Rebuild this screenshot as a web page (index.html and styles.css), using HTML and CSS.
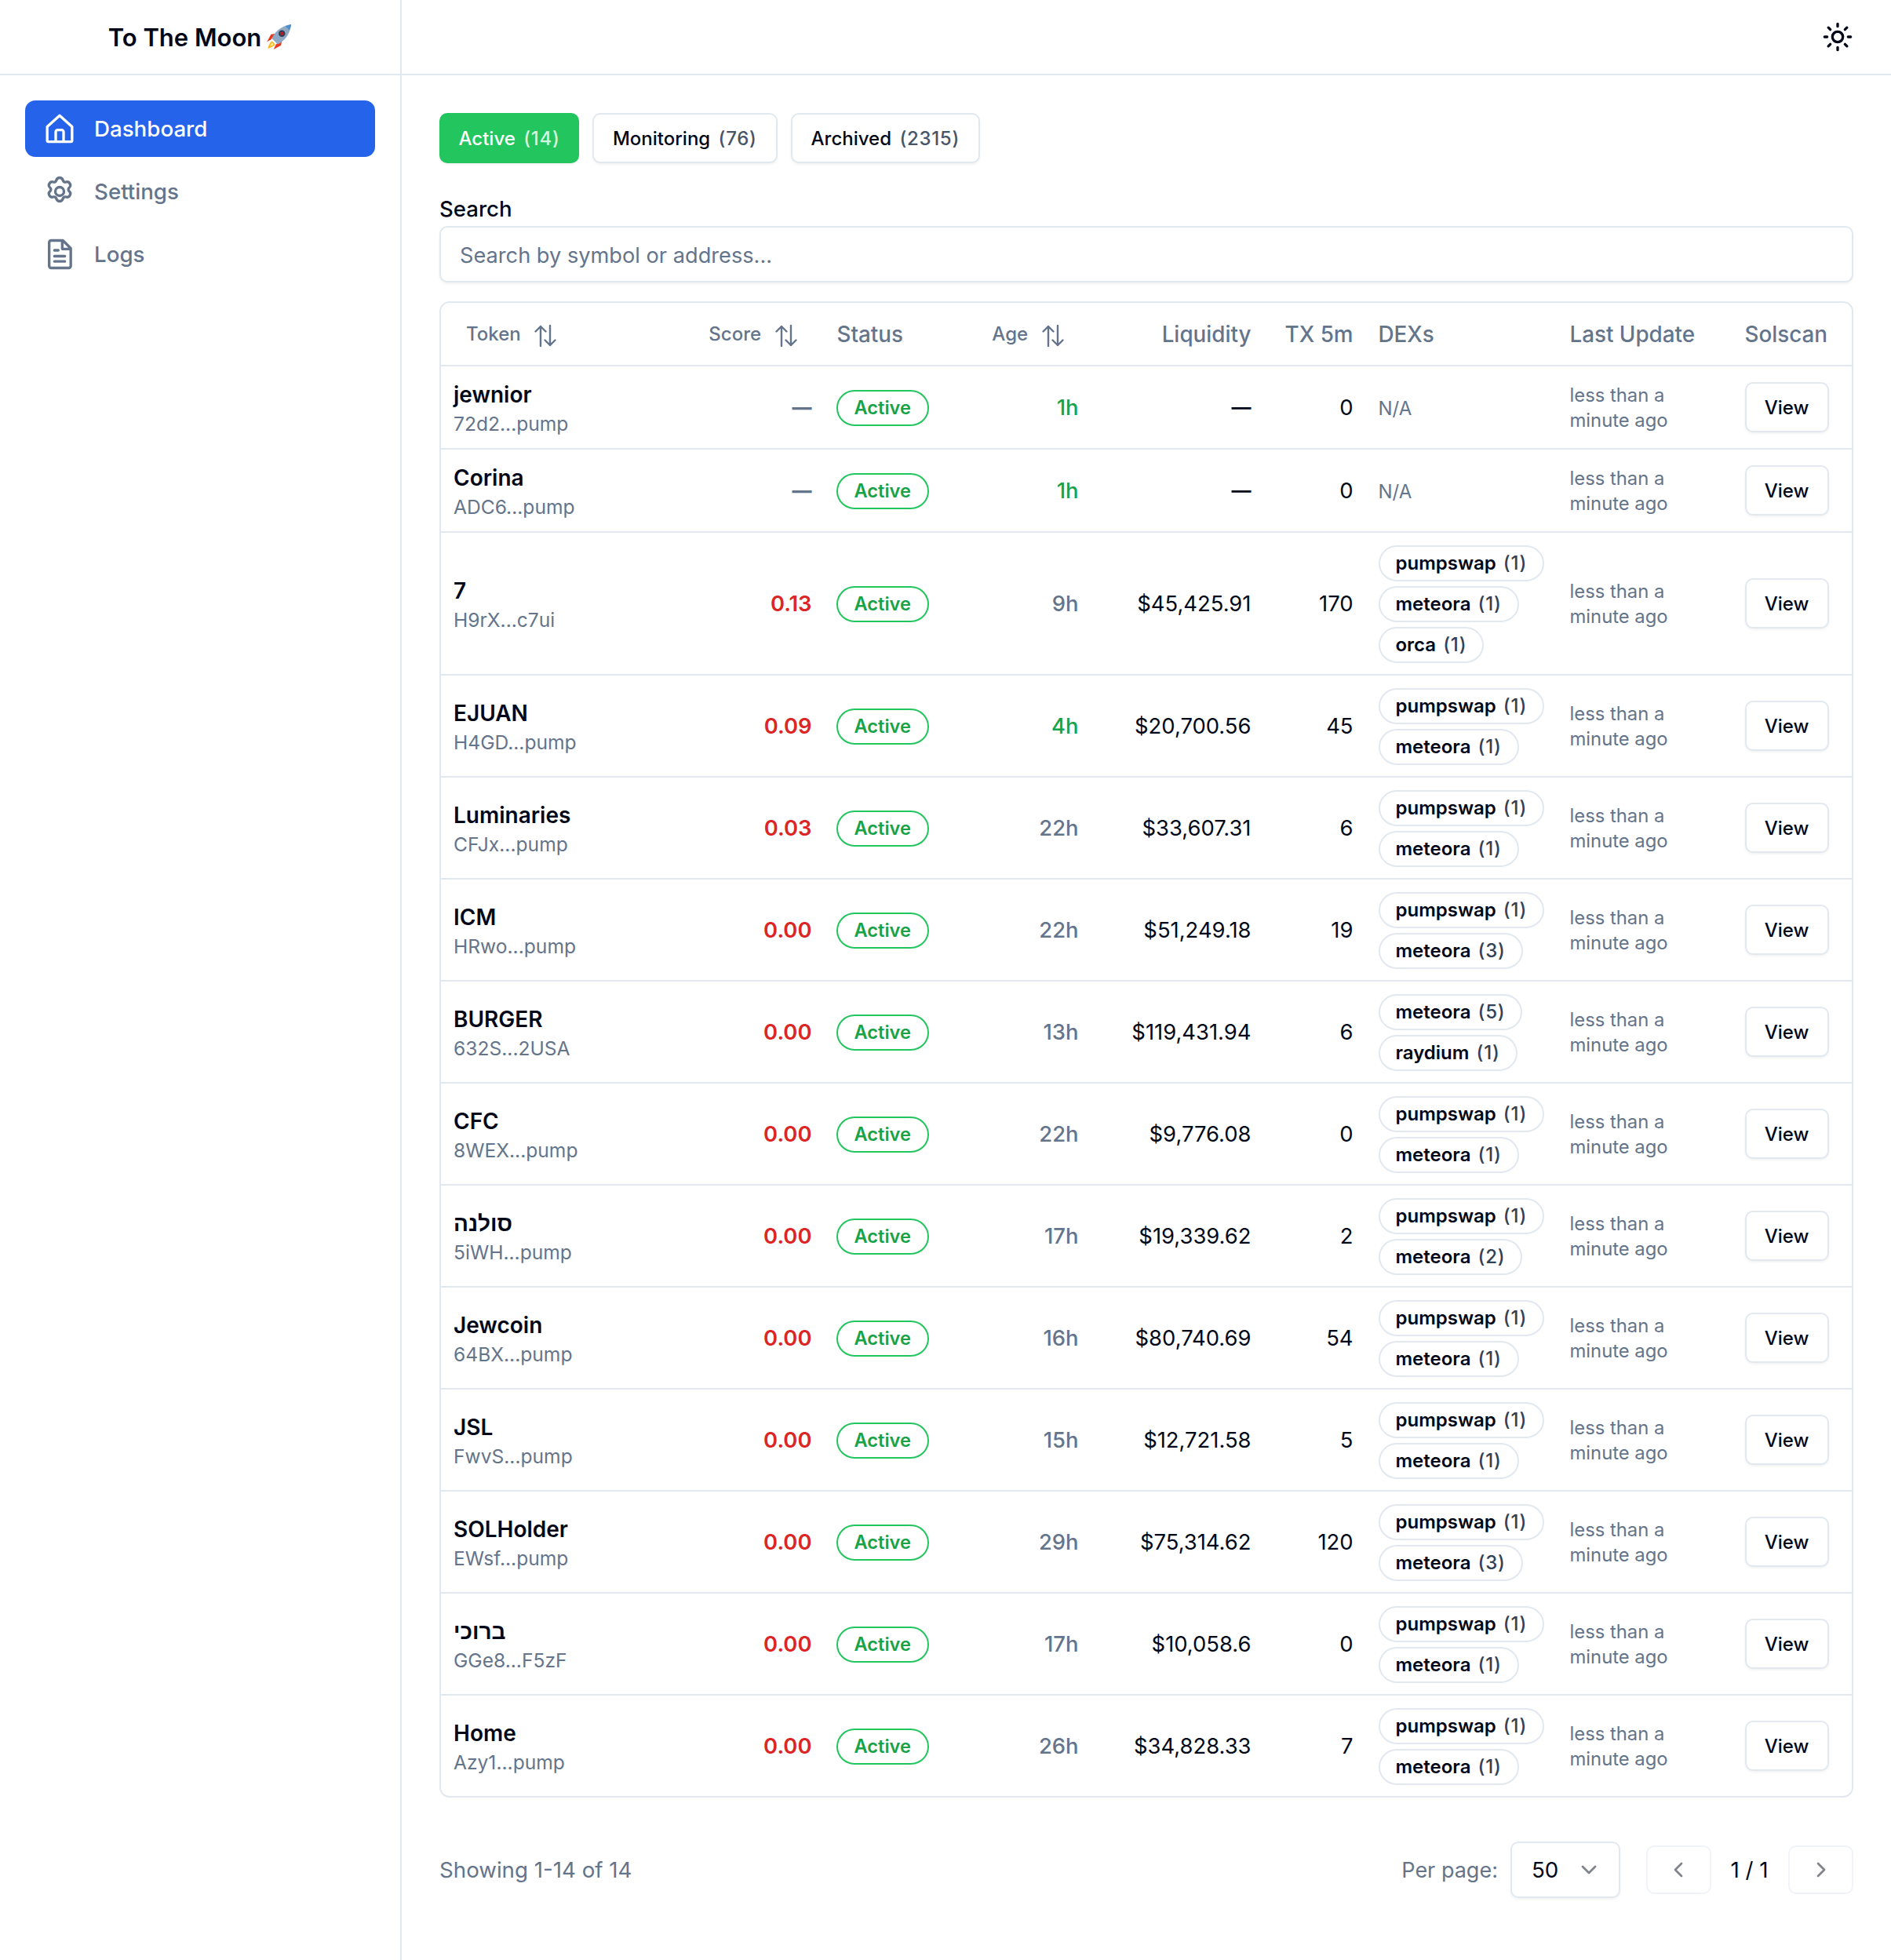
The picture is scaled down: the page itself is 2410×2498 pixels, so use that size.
FILE: index.html
```html
<!DOCTYPE html>
<html lang="en">
<head>
<meta charset="UTF-8">
<title>To The Moon</title>
<link rel="stylesheet" href="styles.css">
</head>
<body>
<svg class="defs" width="0" height="0">
  <symbol id="sort" viewBox="0 0 30 30"><path d="M9 28V3M2.500 9.500 9 3l6.500 6.500M21 2v25M14.500 20.500 21 27l6.500-6.500" fill="none" stroke="currentColor" stroke-width="2.400" stroke-linecap="round" stroke-linejoin="round"/></symbol>
</svg>
<div class="app">
  <aside class="sidebar">
    <div class="brand">To The Moon
      <svg class="rocket" viewBox="0 0 32 32">
        <path d="M7 19 2 22l5-9 6-1z" fill="#e8391f"/>
        <path d="M13 25l-3 6 9-5 1-6z" fill="#e8391f"/>
        <path d="M8 21c-3 2-4 6-5 9 3-1 7-2 9-5z" fill="#fbb91f"/>
        <path d="M8 23c-1 1-2 3-2 4 1 0 3-1 4-2z" fill="#fff0a8"/>
        <path d="M8 18C11 10 19 3 31 1c-1 12-8 20-16 24z" fill="#8fa9c4"/>
        <path d="M24 3l7-2c0 3-1 5-2 7z" fill="#4c8fd0"/>
        <circle cx="20" cy="12" r="4" fill="#2d3f55"/>
        <circle cx="20" cy="12" r="2.200" fill="#b3202a"/>
      </svg>
    </div>
    <nav class="nav">
      <a class="nav-item active">
        <svg class="nav-icon" viewBox="0 0 24 24"><path d="M2.500 10.500 12 2l9.500 8.500V21a1 1 0 0 1-1 1h-17a1 1 0 0 1-1-1zM9 22v-7.500a1.500 1.500 0 0 1 1.500-1.500h3a1.500 1.500 0 0 1 1.500 1.500V22"/></svg>
        Dashboard
      </a>
      <a class="nav-item">
        <svg class="nav-icon" viewBox="0 0 24 24"><path d="M12 1.500c1.300 0 2.200.8 2.500 2 .3 1 1.300 1.600 2.300 1.300 1.200-.3 2.400 0 3 1.200.7 1.100.4 2.300-.5 3.100-.8.800-.8 2 0 2.800.9.800 1.200 2 .5 3.100-.6 1.200-1.800 1.500-3 1.200-1-.3-2 .3-2.300 1.300-.3 1.200-1.200 2-2.500 2s-2.200-.8-2.500-2c-.3-1-1.300-1.600-2.300-1.300-1.200.3-2.400 0-3-1.200-.7-1.100-.4-2.300.5-3.100.8-.8.8-2 0-2.800-.9-.8-1.200-2-.5-3.100.6-1.200 1.800-1.500 3-1.200 1 .3 2-.3 2.300-1.300.3-1.200 1.200-2 2.500-2z"/><circle cx="12" cy="12" r="3.300"/></svg>
        Settings
      </a>
      <a class="nav-item">
        <svg class="nav-icon" viewBox="0 0 24 24"><path d="M5.500 1.500h9l6 6V21a1.500 1.500 0 0 1-1.500 1.500H5.500A1.500 1.500 0 0 1 4 21V3a1.500 1.500 0 0 1 1.500-1.500zM14 2v6h6M8 9h3M8 13.500h8M8 17.500h8"/></svg>
        Logs
      </a>
    </nav>
  </aside>
  <div class="content">
    <header class="topbar">
      <svg class="sun" viewBox="0 0 24 24"><circle cx="12" cy="12" r="4"/><path d="M12 2v2M12 20v2M4.900 4.900l1.500 1.500M17.600 17.600l1.500 1.500M2 12h2M20 12h2M4.900 19.100l1.500-1.500M17.600 6.400l1.500-1.500"/></svg>
    </header>
    <main class="main">
      <div class="tabs">
        <button class="tab tab-on">Active <span class="tab-count">(14)</span></button>
        <button class="tab">Monitoring <span class="tab-count">(76)</span></button>
        <button class="tab">Archived <span class="tab-count">(2315)</span></button>
      </div>
      <label class="search-label">Search</label>
      <input class="search" type="text" placeholder="Search by symbol or address...">
      <div class="card">
        <table class="tokens">
          <colgroup>
            <col class="c-token"><col class="c-score"><col class="c-status"><col class="c-age"><col class="c-liq"><col class="c-tx"><col class="c-dex"><col class="c-upd"><col class="c-sol">
          </colgroup>
          <thead>
            <tr>
              <th class="sortable left">Token <svg class="sort-icon"><use href="#sort"/></svg></th>
              <th class="sortable">Score <svg class="sort-icon"><use href="#sort"/></svg></th>
              <th class="left">Status</th>
              <th class="sortable">Age <svg class="sort-icon"><use href="#sort"/></svg></th>
              <th>Liquidity</th>
              <th>TX 5m</th>
              <th class="left">DEXs</th>
              <th class="left">Last Update</th>
              <th class="left">Solscan</th>
            </tr>
          </thead>
          <tbody>
            <tr>
              <td><div class="name">jewnior</div><div class="addr">72d2...pump</div></td>
              <td class="num score none">—</td>
              <td><span class="status">Active</span></td>
              <td class="num age fresh">1h</td>
              <td class="num dash">—</td>
              <td class="num">0</td>
              <td class="na">N/A</td>
              <td class="upd">less than a minute ago</td>
              <td><button class="view">View</button></td>
            </tr>
            <tr>
              <td><div class="name">Corina</div><div class="addr">ADC6...pump</div></td>
              <td class="num score none">—</td>
              <td><span class="status">Active</span></td>
              <td class="num age fresh">1h</td>
              <td class="num dash">—</td>
              <td class="num">0</td>
              <td class="na">N/A</td>
              <td class="upd">less than a minute ago</td>
              <td><button class="view">View</button></td>
            </tr>
            <tr>
              <td><div class="name">7</div><div class="addr">H9rX...c7ui</div></td>
              <td class="num score">0.13</td>
              <td><span class="status">Active</span></td>
              <td class="num age">9h</td>
              <td class="num">$45,425.91</td>
              <td class="num">170</td>
              <td><div class="dexs"><span class="dex">pumpswap <i>(1)</i></span><span class="dex">meteora <i>(1)</i></span><span class="dex">orca <i>(1)</i></span></div></td>
              <td class="upd">less than a minute ago</td>
              <td><button class="view">View</button></td>
            </tr>
            <tr>
              <td><div class="name">EJUAN</div><div class="addr">H4GD...pump</div></td>
              <td class="num score">0.09</td>
              <td><span class="status">Active</span></td>
              <td class="num age fresh">4h</td>
              <td class="num">$20,700.56</td>
              <td class="num">45</td>
              <td><div class="dexs"><span class="dex">pumpswap <i>(1)</i></span><span class="dex">meteora <i>(1)</i></span></div></td>
              <td class="upd">less than a minute ago</td>
              <td><button class="view">View</button></td>
            </tr>
            <tr>
              <td><div class="name">Luminaries</div><div class="addr">CFJx...pump</div></td>
              <td class="num score">0.03</td>
              <td><span class="status">Active</span></td>
              <td class="num age">22h</td>
              <td class="num">$33,607.31</td>
              <td class="num">6</td>
              <td><div class="dexs"><span class="dex">pumpswap <i>(1)</i></span><span class="dex">meteora <i>(1)</i></span></div></td>
              <td class="upd">less than a minute ago</td>
              <td><button class="view">View</button></td>
            </tr>
            <tr>
              <td><div class="name">ICM</div><div class="addr">HRwo...pump</div></td>
              <td class="num score">0.00</td>
              <td><span class="status">Active</span></td>
              <td class="num age">22h</td>
              <td class="num">$51,249.18</td>
              <td class="num">19</td>
              <td><div class="dexs"><span class="dex">pumpswap <i>(1)</i></span><span class="dex">meteora <i>(3)</i></span></div></td>
              <td class="upd">less than a minute ago</td>
              <td><button class="view">View</button></td>
            </tr>
            <tr>
              <td><div class="name">BURGER</div><div class="addr">632S...2USA</div></td>
              <td class="num score">0.00</td>
              <td><span class="status">Active</span></td>
              <td class="num age">13h</td>
              <td class="num">$119,431.94</td>
              <td class="num">6</td>
              <td><div class="dexs"><span class="dex">meteora <i>(5)</i></span><span class="dex">raydium <i>(1)</i></span></div></td>
              <td class="upd">less than a minute ago</td>
              <td><button class="view">View</button></td>
            </tr>
            <tr>
              <td><div class="name">CFC</div><div class="addr">8WEX...pump</div></td>
              <td class="num score">0.00</td>
              <td><span class="status">Active</span></td>
              <td class="num age">22h</td>
              <td class="num">$9,776.08</td>
              <td class="num">0</td>
              <td><div class="dexs"><span class="dex">pumpswap <i>(1)</i></span><span class="dex">meteora <i>(1)</i></span></div></td>
              <td class="upd">less than a minute ago</td>
              <td><button class="view">View</button></td>
            </tr>
            <tr>
              <td><div class="name">סולנה</div><div class="addr">5iWH...pump</div></td>
              <td class="num score">0.00</td>
              <td><span class="status">Active</span></td>
              <td class="num age">17h</td>
              <td class="num">$19,339.62</td>
              <td class="num">2</td>
              <td><div class="dexs"><span class="dex">pumpswap <i>(1)</i></span><span class="dex">meteora <i>(2)</i></span></div></td>
              <td class="upd">less than a minute ago</td>
              <td><button class="view">View</button></td>
            </tr>
            <tr>
              <td><div class="name">Jewcoin</div><div class="addr">64BX...pump</div></td>
              <td class="num score">0.00</td>
              <td><span class="status">Active</span></td>
              <td class="num age">16h</td>
              <td class="num">$80,740.69</td>
              <td class="num">54</td>
              <td><div class="dexs"><span class="dex">pumpswap <i>(1)</i></span><span class="dex">meteora <i>(1)</i></span></div></td>
              <td class="upd">less than a minute ago</td>
              <td><button class="view">View</button></td>
            </tr>
            <tr>
              <td><div class="name">JSL</div><div class="addr">FwvS...pump</div></td>
              <td class="num score">0.00</td>
              <td><span class="status">Active</span></td>
              <td class="num age">15h</td>
              <td class="num">$12,721.58</td>
              <td class="num">5</td>
              <td><div class="dexs"><span class="dex">pumpswap <i>(1)</i></span><span class="dex">meteora <i>(1)</i></span></div></td>
              <td class="upd">less than a minute ago</td>
              <td><button class="view">View</button></td>
            </tr>
            <tr>
              <td><div class="name">SOLHolder</div><div class="addr">EWsf...pump</div></td>
              <td class="num score">0.00</td>
              <td><span class="status">Active</span></td>
              <td class="num age">29h</td>
              <td class="num">$75,314.62</td>
              <td class="num">120</td>
              <td><div class="dexs"><span class="dex">pumpswap <i>(1)</i></span><span class="dex">meteora <i>(3)</i></span></div></td>
              <td class="upd">less than a minute ago</td>
              <td><button class="view">View</button></td>
            </tr>
            <tr>
              <td><div class="name">ברוכי</div><div class="addr">GGe8...F5zF</div></td>
              <td class="num score">0.00</td>
              <td><span class="status">Active</span></td>
              <td class="num age">17h</td>
              <td class="num">$10,058.6</td>
              <td class="num">0</td>
              <td><div class="dexs"><span class="dex">pumpswap <i>(1)</i></span><span class="dex">meteora <i>(1)</i></span></div></td>
              <td class="upd">less than a minute ago</td>
              <td><button class="view">View</button></td>
            </tr>
            <tr>
              <td><div class="name">Home</div><div class="addr">Azy1...pump</div></td>
              <td class="num score">0.00</td>
              <td><span class="status">Active</span></td>
              <td class="num age">26h</td>
              <td class="num">$34,828.33</td>
              <td class="num">7</td>
              <td><div class="dexs"><span class="dex">pumpswap <i>(1)</i></span><span class="dex">meteora <i>(1)</i></span></div></td>
              <td class="upd">less than a minute ago</td>
              <td><button class="view">View</button></td>
            </tr>
          </tbody>
        </table>
      </div>
      <div class="footer">
        <div class="showing">Showing 1-14 of 14</div>
        <div class="paging">
          <span class="per-page">Per page:</span>
          <div class="select">50
            <svg class="chev" viewBox="0 0 24 24"><path d="m6 9 6 6 6-6"/></svg>
          </div>
          <button class="page-btn"><svg class="chev" viewBox="0 0 24 24"><path d="m15 18-6-6 6-6"/></svg></button>
          <span class="page-no">1 / 1</span>
          <button class="page-btn"><svg class="chev" viewBox="0 0 24 24"><path d="m9 18 6-6-6-6"/></svg></button>
        </div>
      </div>
    </main>
  </div>
</div>
</body>
</html>
```

FILE: styles.css
```css
*{
    box-sizing: border-box;
}
body{
    margin: 0;
    background: #fff;
    color: #020817;
    font-family: Inter, "Liberation Sans", sans-serif;
    font-size: 28px;
}
button{
    font-family: inherit;
}
.defs{
    display: block;
    height: 0;
}
.app{
    display: flex;
    min-height: 2498px;
}
.sidebar{
    flex: 0 0 512px;
    border-right: 2px solid #e2e8f0;
}
.brand{
    display: flex;
    align-items: center;
    justify-content: center;
    gap: 5px;
    height: 96px;
    border-bottom: 2px solid #e2e8f0;
    font-size: 31px;
    font-weight: 600;
}
.rocket{
    width: 34px;
    height: 34px;
}
.nav{
    display: flex;
    flex-direction: column;
    gap: 8px;
    padding: 32px;
}
.nav-item{
    display: flex;
    align-items: center;
    gap: 24px;
    height: 72px;
    padding: 0 24px;
    border-radius: 13px;
    color: #64748b;
    font-size: 27.700px;
    font-weight: 500;
}
.nav-item.active{
    background: #2563eb;
    color: #fff;
}
.nav-icon{
    width: 40px;
    height: 40px;
    fill: none;
    stroke: currentColor;
    stroke-width: 2;
    stroke-linecap: round;
    stroke-linejoin: round;
}
.content{
    flex: 1;
    min-width: 0;
}
.topbar{
    display: flex;
    align-items: center;
    justify-content: flex-end;
    height: 96px;
    padding-right: 48px;
    border-bottom: 2px solid #e2e8f0;
}
.sun{
    width: 40px;
    height: 40px;
    fill: none;
    stroke: #020817;
    stroke-width: 2;
    stroke-linecap: round;
}
.main{
    padding: 48px;
}
.tabs{
    display: flex;
    gap: 17px;
}
.tab{
    height: 64px;
    padding: 0 24px;
    border: 2px solid #e2e8f0;
    border-radius: 10px;
    background: #fff;
    color: #020817;
    font-size: 24px;
    font-weight: 500;
    word-spacing: 4px;
    box-shadow: 0 2px 3px rgba(0,0,0,.05);
}
.tab-count{
    color: #475569;
    letter-spacing: .7px;
}
.tab-on{
    padding: 0 22.500px;
    border-color: #22c55e;
    background: #22c55e;
    color: #fff;
}
.tab-on .tab-count{
    color: #d3f5e0;
}
.search-label{
    display: block;
    margin-top: 41px;
    line-height: 34px;
    font-size: 27.600px;
    font-weight: 500;
}
.search{
    display: block;
    width: 100%;
    height: 72px;
    margin-top: 5px;
    padding: 2px 24px 0;
    border: 2px solid #e2e8f0;
    border-radius: 10px;
    font: inherit;
    font-size: 27.200px;
    box-shadow: 0 2px 3px rgba(0,0,0,.05);
}
.search::placeholder{
    color: #64748b;
}
.card{
    margin-top: 24px;
    border: 2px solid #e2e8f0;
    border-radius: 13px;
    overflow: hidden;
}
.tokens{
    width: 100%;
    table-layout: fixed;
    border-collapse: collapse;
}
.c-token{ width: 298.500px; }
.c-score{ width: 190px; }
.c-status{ width: 170px; }
.c-age{ width: 170px; }
.c-liq{ width: 220px; }
.c-tx{ width: 130px; }
.c-dex{ width: 244px; }
.c-upd{ width: 223px; }
.tokens th{
    height: 80px;
    padding: 0 16px;
    border-bottom: 2px solid #e2e8f0;
    color: #64748b;
    font-size: 27.800px;
    font-weight: 500;
    text-align: right;
    white-space: nowrap;
}
.tokens th.left{
    text-align: left;
}
.tokens th.sortable{
    padding-top: 3px;
    padding-right: 34px;
    font-size: 24px;
}
.tokens th.sortable.left{
    padding-left: 32px;
}
.sort-icon{
    width: 30px;
    height: 30px;
    margin-left: 10px;
    vertical-align: middle;
}
.tokens td{
    padding: 16px 16px 14px;
    border-bottom: 2px solid #e2e8f0;
    vertical-align: middle;
    text-align: left;
}
.tokens td:first-child{
    padding-top: 17px;
    padding-bottom: 13px;
}
.tokens td:last-child,
.tokens td.num{
    padding-top: 15px;
    padding-bottom: 15px;
}
.tokens tr:last-child td{
    border-bottom: 0;
}
.name{
    font-weight: 600;
    line-height: 39px;
}
.addr{
    color: #64748b;
    font-size: 24.600px;
    line-height: 35px;
}
.tokens td.num{
    font-size: 27.400px;
    text-align: right;
}
.tokens td.dash{
    font-size: 25px;
    font-weight: 600;
}
.score{
    color: #dc2626;
    font-weight: 600;
}
.tokens td.score.none{
    color: #64748b;
    font-size: 25px;
    font-weight: 800;
}
.status{
    display: inline-block;
    margin-left: -1px;
    padding: 0 21px;
    border: 2px solid #22c55e;
    border-radius: 999px;
    color: #16a34a;
    font-size: 23.600px;
    font-weight: 600;
    line-height: 42px;
}
.age{
    color: #64748b;
    font-weight: 500;
}
.age.fresh{
    color: #16a34a;
}
.na{
    color: #64748b;
    font-size: 24px;
}
.dexs{
    display: flex;
    flex-direction: column;
    align-items: flex-start;
    gap: 6px;
}
.dex{
    padding: 0 20px;
    border: 2px solid #e2e8f0;
    border-radius: 999px;
    font-size: 24px;
    font-weight: 600;
    line-height: 42px;
    white-space: nowrap;
    word-spacing: 3px;
}
.dex i{
    color: #334155;
    font-style: normal;
    font-weight: 500;
    letter-spacing: .8px;
}
.upd{
    color: #64748b;
    font-size: 23.800px;
    line-height: 32px;
}
.view{
    width: 107px;
    height: 64px;
    border: 2px solid #e2e8f0;
    border-radius: 10px;
    background: #fff;
    color: #020817;
    font-size: 24px;
    font-weight: 500;
    box-shadow: 0 2px 3px rgba(0,0,0,.05);
}
.footer{
    display: flex;
    align-items: center;
    justify-content: space-between;
    margin-top: 56px;
    color: #64748b;
    font-size: 27.700px;
}
.paging{
    display: flex;
    align-items: center;
}
.per-page{
    margin-right: 16px;
    font-size: 27px;
}
.select{
    display: flex;
    align-items: center;
    justify-content: space-between;
    width: 140px;
    height: 72px;
    margin-right: 33px;
    padding: 0 22px 0 25px;
    border: 2px solid #e2e8f0;
    border-radius: 10px;
    color: #020817;
    box-shadow: 0 2px 3px rgba(0,0,0,.05);
}
.chev{
    width: 32px;
    height: 32px;
    fill: none;
    stroke: #020817;
    stroke-opacity: .5;
    stroke-width: 2;
    stroke-linecap: round;
    stroke-linejoin: round;
}
.page-btn{
    display: flex;
    align-items: center;
    justify-content: center;
    width: 83px;
    height: 62px;
    padding: 0;
    border: 2px solid #f0f3f8;
    border-radius: 10px;
    background: #fff;
}
.page-no{
    margin: 0 25.500px 0 24.500px;
    color: #020817;
    white-space: nowrap;
}
```
